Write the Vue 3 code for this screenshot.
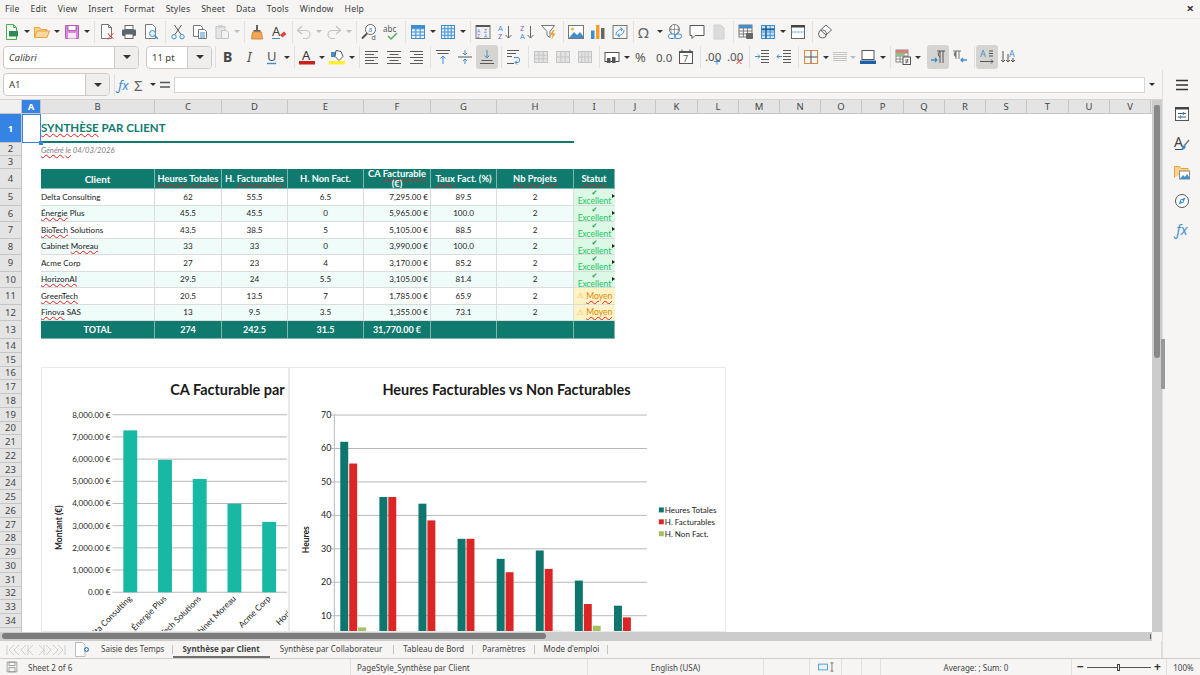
<script setup>
const blue = '#3f8fcf'
const gray = '#5a5a5a'
const dim = '#c4c4c4'

const txt = (x, y, size, str, fill = gray, extra = '') =>
  `<text x="${x}" y="${y}" font-size="${size}" font-family="Noto Sans, sans-serif" fill="${fill}" stroke="none" ${extra}>${str}</text>`

const grid = (x, y, w, h, nx, ny, color, fill = '#fff') => {
  let out = `<rect x="${x}" y="${y}" width="${w}" height="${h}" fill="${fill}" stroke="${color}"/>`
  for (let i = 1; i < nx; i++) out += `<path d="M${x + (w * i) / nx} ${y}v${h}" stroke="${color}"/>`
  for (let i = 1; i < ny; i++) out += `<path d="M${x} ${y + (h * i) / ny}h${w}" stroke="${color}"/>`
  return out
}

const lines = (rows, color = gray) =>
  rows.map(([x, y, w]) => `<path d="M${x} ${y}h${w}" stroke="${color}"/>`).join('')

const icons = {
  new: `<path d="M2.5 .5h7l3 3v12h-10z" fill="#f4fbf4" stroke="#4caf50"/><path d="M9.5 .5v3h3" stroke="#4caf50"/><rect x="5" y="7" width="9" height="5.5" fill="#2e8b57"/>`,
  open: `<path d="M.5 13.5v-10h5l1.5 2h6v2" fill="#fbd38a" stroke="#e8a33d"/><path d="M.5 13.5l2.5-6.5h12.5l-2.5 6.5z" fill="#fcd9a0" stroke="#e8a33d"/>`,
  save: `<path d="M1.5 1.5h13v13h-13z" fill="#d58ed8" stroke="#b45cb8"/><rect x="4" y="1.5" width="8" height="5" fill="#fff" stroke="#b45cb8"/><rect x="4" y="9" width="8" height="5.5" fill="#f6e6f7"/>`,
  pdf: `<path d="M2.5 .5h7l3 3v11h-10z" fill="#fff" stroke="#777"/><path d="M9.5 .5v3h3" stroke="#777"/><path d="M9 9c1 3 3 4 5.5 5.5M14.5 9.5c-2 1-4 3-5.5 6" stroke="#e0453a"/>`,
  print: `<rect x="4" y="1.5" width="8" height="4" fill="#fff" stroke="#666"/><rect x="1" y="5.5" width="14" height="6.5" rx="1" fill="#5c6670"/><rect x="4" y="10" width="8" height="4.5" fill="#fff" stroke="#666"/>`,
  preview: `<path d="M2.5 .5h7l3 3v11h-10z" fill="#fff" stroke="#777"/><circle cx="9.5" cy="9.5" r="3" fill="#e3f0fa" stroke="${blue}"/><path d="M11.8 11.8l3 3" stroke="${blue}" stroke-width="1.5"/>`,
  cut: `<path d="M4.5 1l6.5 9.5M11.5 1L5 10.5" stroke="#555"/><circle cx="4" cy="12.7" r="2.2" stroke="${blue}"/><circle cx="12" cy="12.7" r="2.2" stroke="${blue}"/>`,
  copy: `<path d="M1.5 1.5h7l2 2v9h-9z" fill="#fff" stroke="#777"/><path d="M6.5 5.5h6l2 2v7h-8z" fill="#fff" stroke="#777"/>${lines([[8, 9, 5], [8, 11, 5], [8, 13, 5]], blue)}`,
  paste: `<rect x="2" y="2.5" width="9" height="12" fill="#e6e6e6" stroke="${dim}"/><rect x="4.5" y="1" width="4" height="3" fill="#d0d0d0"/><path d="M7.5 6.5h5l2 2v6h-7z" fill="#f2f2f2" stroke="${dim}"/>`,
  clone: `<path d="M7 1h2v5H7z" fill="#666"/><path d="M4.5 6h7v2h-7z" fill="#666"/><path d="M3.5 8h9l1 7h-11z" fill="#f0a858" stroke="#d98a3a"/>`,
  clear: `${txt(1, 12, 13, 'A', '#444')}<path d="M9 11l4-3.5 2.5 2.5-4 3.5z" fill="#e0453a"/><path d="M1 14.5h8" stroke="${blue}"/>`,
  undo: `<path d="M6 2L1.5 6.5 6 10M1.5 6.5H10a4 4 0 0 1 0 8H7" stroke="${dim}" stroke-width="1.2"/>`,
  redo: `<path d="M10 2l4.5 4.5L10 10M14.5 6.5H6a4 4 0 0 0 0 8h3" stroke="${dim}" stroke-width="1.2"/>`,
  find: `<circle cx="9.5" cy="5.5" r="5" fill="#fff" stroke="#666"/><path d="M6 9.5l-5 5" stroke="#555" stroke-width="2"/>${txt(7.3, 8, 7, 'a', blue)}${txt(10.5, 15.5, 7, 'd', '#555')}`,
  spell: `${txt(0, 8, 8, 'abc', '#555')}<path d="M5 12l3 3 6-6" stroke="#4caf50" stroke-width="1.4"/>`,
  rows: grid(1.5, 1.5, 13, 13, 3, 4, blue, '#e8f2fa') + `<rect x="1.5" y="1.5" width="13" height="3" fill="${blue}"/>`,
  cols: grid(1.5, 1.5, 13, 13, 4, 4, blue, '#e8f2fa'),
  sort: `<rect x="1" y="1.5" width="14" height="13" fill="#f0f0f0" stroke="#777"/><rect x="1" y="1" width="14" height="2" fill="#555"/>${txt(2, 8.5, 5, 'A', blue)}${txt(9, 8.5, 5, 'Z', '#8e63c8')}${txt(2, 14, 5, 'Z', '#8e63c8')}${txt(9, 14, 5, 'A', blue)}`,
  asc: `${txt(1, 7, 7.5, 'A', blue)}${txt(1, 15, 7.5, 'Z', '#8e63c8')}<path d="M11.5 2v12M8.5 11l3 3 3-3" stroke="#666"/>`,
  desc: `${txt(1, 7, 7.5, 'Z', '#8e63c8')}${txt(1, 15, 7.5, 'A', blue)}<path d="M11.5 2v12M8.5 11l3 3 3-3" stroke="#666"/>`,
  filter: `<path d="M.5 1.5h13L9 7.5v6l-3-2v-4z" fill="#fff" stroke="#777"/><path d="M12 6l-3 5h2.500l-1 4.500 4-6h-2.500l1.500-3.500z" fill="#f0a030"/>`,
  image: `<rect x=".5" y="1.5" width="15" height="13" fill="#fff" stroke="#777"/><circle cx="4.500" cy="5" r="1.500" fill="#f0b040"/><path d="M1 14l5-6 3 3 3-3 3 4v2z" fill="${blue}"/>`,
  chart: `<rect x="1" y="6.500" width="3.500" height="8.500" fill="${blue}"/><rect x="6" y="1" width="3.500" height="14" fill="#f0a030"/><rect x="11" y="4" width="3.500" height="11" fill="#666"/>`,
  pivot: `<rect x="1" y="1.500" width="14" height="13" fill="#f4f4f4" stroke="#777"/><path d="M4 11c0-3 2-5 6-6M8 3.500l2.500 1.500L9 7M12 6c0 3-2 5-6 5.500M8 13l-2.500-1.500L7 9.500" stroke="${blue}"/>`,
  omega: txt(1, 13.5, 15, 'Ω', '#666'),
  link: `<circle cx="7.500" cy="5.500" r="5" fill="#fff" stroke="#777"/><path d="M2.500 5.500h10M7.500 .5v10M4.500 1.500c-1 2.500-1 5.500 0 8M10.500 1.500c1 2.500 1 5.500 0 8" stroke="#777" stroke-width=".7"/><rect x="1.500" y="10" width="7" height="4.500" rx="2.200" fill="#fff" stroke="${blue}"/><rect x="7.500" y="10" width="7" height="4.500" rx="2.200" fill="none" stroke="${blue}"/>`,
  comment: `<path d="M1 1.500h14v10H6l-3 3v-3H1z" fill="#fff" stroke="#555"/>`,
  note: `<path d="M3 1h7l3 3v11H3z" fill="#dcdcdc" stroke="#d0d0d0"/>`,
  freeze: grid(1, 1, 13, 12, 3, 4, '#777') + `<rect x="1" y="1" width="13" height="3" fill="${blue}"/><rect x="8" y="9" width="7" height="6" rx="1" fill="#666"/>`,
  split: grid(1.500, 1.500, 13, 13, 3, 4, blue, '#cfe3f4') + `<path d="M1.500 5.500h13M6 1.500v13" stroke="#1d5f99" stroke-width="1.300"/>`,
  header: `<rect x="1.500" y="1.500" width="13" height="13" fill="#fff" stroke="#666"/><rect x="1" y="1" width="14" height="2.500" fill="#444"/><path d="M1.500 8h13" stroke="${blue}" stroke-dasharray="2 1"/>`,
  shapes: `<path d="M9 1l5.500 5L9 11 3.500 6z" fill="#fff" stroke="#666"/><circle cx="5.500" cy="10" r="4" fill="none" stroke="#666"/>`,

  bold: txt(3, 13, 14, 'B', '#444', 'font-weight="700"'),
  italic: txt(5, 13, 14, 'I', '#555', 'font-style="italic"'),
  under: `${txt(3, 12, 13, 'U', '#555')}<path d="M3 14.500h9" stroke="${blue}" stroke-width="1.400"/>`,
  fcolor: `${txt(3, 11, 13, 'A', '#333')}<rect x="0" y="12" width="16" height="3.500" fill="#c9211e"/>`,
  bcolor: `<path d="M2 3h5v5H2z" fill="${blue}"/><path d="M7 1.500l5 1 2 5-4 4-4-4z" fill="#fff" stroke="#555"/><rect x="0" y="12" width="16" height="3.500" fill="#ffef33"/>`,
  left: lines([[1, 2.500, 13], [1, 5.500, 9], [1, 8.500, 13], [1, 11.500, 9], [1, 14.500, 13]]),
  center: lines([[1, 2.500, 14], [3.500, 5.500, 9], [1, 8.500, 14], [3.500, 11.500, 9], [1, 14.500, 14]]),
  right: lines([[2, 2.500, 13], [6, 5.500, 9], [2, 8.500, 13], [6, 11.500, 9], [2, 14.500, 13]]),
  top: `${lines([[1, 1.500, 14], [2.500, 4.500, 11]])}<path d="M8 15V7M5.500 9.500L8 7l2.500 2.500" stroke="${blue}"/>`,
  mid: `${lines([[1, 8, 14]])}<path d="M8 1v5M6 4l2 2 2-2M8 15v-5M6 12l2-2 2 2" stroke="${blue}"/>`,
  bottom: `${lines([[2.500, 11.500, 11], [1, 14.500, 14]])}<path d="M8 1v8M5.500 6.500L8 9l2.500-2.500" stroke="${blue}"/>`,
  wrap: `${lines([[1, 1.500, 12], [1, 4.500, 9], [1, 7.500, 5], [1, 14.500, 7]])}<path d="M8 8.500h4c2 0 2 5 0 5H9M11 11.500l-2 2 2 2" stroke="${blue}"/>`,
  merge1: grid(1.500, 2.500, 13, 11, 3, 3, dim, '#e4e4e4'),
  merge2: grid(1.500, 2.500, 13, 11, 3, 2, dim, '#e4e4e4'),
  merge3: grid(1.500, 2.500, 13, 11, 4, 2, dim, '#e4e4e4'),
  currency: `<rect x="1" y="3.500" width="14" height="9" fill="#fff" stroke="#555"/><rect x="3" y="9" width="3.500" height="5" fill="#555"/><rect x="8" y="8" width="3.500" height="6" fill="#555"/>`,
  percent: txt(1, 13, 13, '%', '#555'),
  dec0: txt(0, 13, 11.5, '0.0', '#555'),
  date: `<rect x="1.500" y="2.500" width="13" height="12" fill="#fff" stroke="#555"/><rect x="1" y="2" width="14" height="2" fill="#555"/><path d="M4 .5v2M12 .5v2" stroke="#555"/>${txt(5, 13, 9, '7', '#555')}`,
  addDec: `${txt(0, 12, 11.5, '.00', '#555')}<path d="M12 9.500v6M9 12.500h6" stroke="${blue}"/>`,
  delDec: `${txt(0, 12, 11.5, '.00', '#555')}<path d="M9.500 10l5 5M14.500 10l-5 5" stroke="#e0453a"/>`,
  indent: `${lines([[7, 1.500, 8], [7, 4.500, 8], [7, 7.500, 8], [7, 10.500, 8], [7, 13.500, 8]])}<path d="M1 7.500h5M4 5.500l2 2-2 2" stroke="${blue}"/>`,
  outdent: `${lines([[7, 1.500, 8], [7, 4.500, 8], [7, 7.500, 8], [7, 10.500, 8], [7, 13.500, 8]])}<path d="M6 7.500H1M3 5.500l-2 2 2 2" stroke="${blue}"/>`,
  border: `<rect x="1.500" y="1.500" width="13" height="13" stroke="#e08a3c"/><path d="M8 1.500v13M1.500 8h13" stroke="#555"/>`,
  borderline: lines([[1, 3.500, 14], [1, 5.500, 14], [1, 7.500, 14], [1, 9.500, 14], [1, 11.500, 14]], dim),
  bordercolor: `<rect x="2" y="1.500" width="12" height="9" fill="#fff" stroke="#555"/><rect x="0" y="11.500" width="16" height="3.500" fill="#1f5fa8"/>`,
  cond: grid(1, 1, 12, 12, 3, 4, '#888') + `<rect x="1" y="1" width="12" height="3" fill="#d9807a"/><rect x="1" y="4" width="8" height="3" fill="#8cc084"/><rect x="8" y="8" width="7.500" height="7.500" fill="#fff" stroke="#555"/><path d="M10 11h3.500M10 13h3.500M13 10l-2 4.500" stroke="#555" stroke-width=".8"/>`,
  ltr: `<path d="M7 2h8M10 2v12M13 2v12" stroke="#555"/><path d="M10 2.500a3 3 0 0 0 0 5.500" stroke="#555"/><path d="M1 11h6M5 9l2 2-2 2" stroke="${blue}" stroke-width="1.300"/>`,
  rtl: `<path d="M1 2h8M4 2v8M7 2v8" stroke="#777"/><path d="M4 2.500a3 3 0 0 0 0 5.500" fill="#777" stroke="#777"/><path d="M15 11H9M11 9l-2 2 2 2" stroke="${blue}" stroke-width="1.300"/>`,
  horiz: `${txt(1, 8, 9, 'A', blue)}<path d="M10 2h4M10 4.500h4M10 7h4" stroke="#555"/><path d="M1 12.500h13M12 10.500l2 2-2 2" stroke="#555"/>`,
  vert: `${txt(8, 8, 9, 'A', blue)}<path d="M2 2v11M0 11l2 2 2-2M7 5v8M5 11l2 2 2-2M12 9v4M10 11l2 2 2-2" stroke="#555"/>`,

  menu: `<path d="M2 3.500h12M2 8h12M2 12.500h12" stroke="#333" stroke-width="1.500"/>`,
  props: `<rect x="1.500" y="1.500" width="13" height="13" fill="#fff" stroke="#555"/><rect x="1" y="1" width="14" height="2.500" fill="#444"/><path d="M4 7.500h8M4 11h8" stroke="#555"/><path d="M9.500 6v3M6.500 9.500v3" stroke="${blue}" stroke-width="1.400"/>`,
  styles: `${txt(0, 12, 14, 'A', '#444')}<path d="M1 14.500h8" stroke="#444"/><path d="M15 5l-5 6" stroke="#777" stroke-width="1.400"/><path d="M10.500 10c-2 .5-2.500 2.500-3.500 5 2.500 0 4.500-1 4.800-3.500z" fill="${blue}"/>`,
  gallery: `<path d="M.5 13.500v-11h5l1.500 2h7v2" fill="#fbd38a" stroke="#e8a33d"/><rect x="5.500" y="7" width="10" height="8" fill="#fff" stroke="#888"/><path d="M6 15l3-4 2 2 2-3 2 3v2z" fill="${blue}"/>`,
  nav: `<circle cx="8" cy="8" r="6.500" fill="#fff" stroke="#555"/><path d="M11.500 4.500L9.500 9.500 4.500 11.500 6.500 6.500z" fill="${blue}"/><circle cx="8" cy="8" r="1" fill="#fff"/>`,
  fx: txt(1, 13, 14, 'ƒx', blue, 'font-style="italic"'),
  fxBar: txt(1, 13, 13, 'ƒx', blue, 'font-style="italic"'),
  sigma: txt(2, 13.500, 15, 'Σ', '#666'),
  equals: `<path d="M3 5.500h10M3 10h10" stroke="#555" stroke-width="1.600"/>`,
  saved: `<path d="M1.500 1.500h13v13h-13z" stroke="#888"/><rect x="4" y="1.500" width="8" height="4.500" stroke="#888"/><rect x="4" y="9" width="8" height="5.500" stroke="#888"/>`,
}

// toolbar tokens: "|" separator, "|3" narrow one, "^" dropdown arrow, "^d" disabled arrow, "_" blank,
// "*name" pressed button, "name:19" button with its own width
const parse = (list) =>
  list.split(' ').map((t) => {
    if (t[0] === '|') return { kind: 'sep', w: t[1] ? +t[1] : 5 }
    if (t[0] === '^') return { kind: 'caret', off: t[1] === 'd' }
    if (t === '_') return { kind: 'blank' }
    const [name, w] = t.replace('*', '').split(':')
    return { kind: 'btn', name, on: t[0] === '*', w: w ? +w : 22 }
  })

const toolbarOne = parse(
  'new ^ open ^ save ^ | pdf print preview | cut copy paste ^d | clone clear |3 undo ^d redo ^d | find spell | rows ^ cols ^ | sort asc desc filter | image chart pivot |3 omega ^ link comment note | freeze split ^ header | shapes'
)
const toolbarTwo = parse(
  'bold italic under ^ | fcolor ^ bcolor ^ | left center right | top mid *bottom | wrap | merge1 merge2 merge3 | currency ^ percent dec0 date | addDec delDec | indent outdent | border ^ borderline:19 ^d bordercolor ^ | cond ^ _ *ltr rtl | *horiz vert'
)

const columns = [
  ['A', 19], ['B', 114], ['C', 67], ['D', 66], ['E', 76], ['F', 67], ['G', 66], ['H', 77],
  ['I', 41], ['J', 41], ['K', 42], ['L', 41], ['M', 41], ['N', 41], ['O', 41], ['P', 42],
  ['Q', 41], ['R', 41], ['S', 41], ['T', 42], ['U', 41], ['V', 41],
]

const rowHeights = [29, 12.5, 13.5, 20, 16.5, 16.5, 16.5, 16.5, 16.5, 16.5, 16.5, 16.5, 18]
while (rowHeights.length < 34) rowHeights.push(13.75)

const misspelt = new Set([
  'SYNTHÈSE', 'Généré', 'le', 'Heures', 'Totales', 'Facturables', 'Facturable', 'Taux', 'Nb', 'Projets', 'Statut',
  'Énergie', 'BioTech', 'Moreau', 'HorizonAI', 'GreenTech', 'Finova', 'Moyen',
])
const words = (text) => String(text).split(/( )/)

const heads = [
  { t: 'Client', cls: 'big' },
  { t: 'Heures Totales' },
  { t: 'H. Facturables' },
  { t: 'H. Non Fact.' },
  { t: 'CA Facturable (€)', cls: 'wrap' },
  { t: 'Taux Fact. (%)' },
  { t: 'Nb Projets' },
  { t: 'Statut' },
]

const clients = [
  ['Delta Consulting', 62, 55.5, 6.5, '7,295.00 €', '89.5', 7295],
  ['Énergie Plus', 45.5, 45.5, 0, '5,965.00 €', '100.0', 5965],
  ['BioTech Solutions', 43.5, 38.5, 5, '5,105.00 €', '88.5', 5105],
  ['Cabinet Moreau', 33, 33, 0, '3,990.00 €', '100.0', 3990],
  ['Acme Corp', 27, 23, 4, '3,170.00 €', '85.2', 3170],
  ['HorizonAI', 29.5, 24, 5.5, '3,105.00 €', '81.4', 3105],
  ['GreenTech', 20.5, 13.5, 7, '1,785.00 €', '65.9', 1785],
  ['Finova SAS', 13, 9.5, 3.5, '1,355.00 €', '73.1', 1355],
]

// chart 1, drawn in page coordinates through the viewBox
const euroY = (v) => 593 - v * 0.02237
const euroTicks = [0, 1, 2, 3, 4, 5, 6, 7, 8].map((n) => ({
  y: euroY(n * 1000),
  label: `${n === 0 ? '0' : n + ',000'}.00 €`,
}))
const caBars = clients.slice(0, 5).map((c, i) => ({ x: 123 + i * 35, y: euroY(c[6]), h: 593 - euroY(c[6]) }))
const caLabels = clients.slice(0, 6).map((c, i) => ({ name: c[0], x: 132 + i * 35, y: 600 }))

// chart 2
const hourY = (v) => 650.3 - v * 3.37
const hourTicks = [10, 20, 30, 40, 50, 60, 70].map((v) => ({ v, y: hourY(v) }))
const series = [
  { i: 1, color: '#0f766e' },
  { i: 2, color: '#dc2626' },
  { i: 3, color: '#a4bf66' },
]
const hourBars = clients.flatMap((c, g) =>
  series.map((s, k) => ({
    x: 339 + g * 39.4 + k * 9,
    y: hourY(c[s.i]),
    h: 650.3 - hourY(c[s.i]),
    color: s.color,
  }))
)
const legend = [
  { label: 'Heures Totales', color: '#0f766e', y: 510 },
  { label: 'H. Facturables', color: '#dc2626', y: 522 },
  { label: 'H. Non Fact.', color: '#a4bf66', y: 534 },
]

const menus = ['File', 'Edit', 'View', 'Insert', 'Format', 'Styles', 'Sheet', 'Data', 'Tools', 'Window', 'Help']
const sideIcons = ['menu', 'props', 'styles', 'gallery', 'nav', 'fx']
const tabs = ['Saisie des Temps', 'Synthèse par Client', 'Synthèse par Collaborateur', 'Tableau de Bord', 'Paramètres', "Mode d'emploi"]
</script>

<template>
  <div class="app">
    <div class="menubar">
      <span v-for="m in menus" :key="m" class="menu-item">{{ m }}</span>
      <span class="close">×</span>
    </div>

    <div class="toolbar">
      <template v-for="(t, i) in toolbarOne" :key="i">
        <span v-if="t.kind === 'sep'" class="sep" :style="{ width: t.w + 'px' }"></span>
        <span v-else-if="t.kind === 'caret'" class="caret" :class="{ off: t.off }"></span>
        <span v-else-if="t.kind === 'blank'" class="blank"></span>
        <span v-else class="tool" :class="{ on: t.on }" :style="{ width: t.w + 'px' }">
          <svg width="16" height="16" viewBox="0 0 16 16" fill="none" v-html="icons[t.name]"></svg>
        </span>
      </template>
    </div>

    <div class="toolbar second">
      <div class="combo font-combo"><span class="combo-text italic">Calibri</span><span class="combo-btn"><i class="caret-big"></i></span></div>
      <div class="combo size-combo"><span class="combo-text">11 pt</span><span class="combo-btn"><i class="caret-big"></i></span></div>
      <span class="sep sep-combo"></span>
      <template v-for="(t, i) in toolbarTwo" :key="i">
        <span v-if="t.kind === 'sep'" class="sep" :style="{ width: t.w + 'px' }"></span>
        <span v-else-if="t.kind === 'caret'" class="caret" :class="{ off: t.off }"></span>
        <span v-else-if="t.kind === 'blank'" class="blank"></span>
        <span v-else class="tool" :class="{ on: t.on }" :style="{ width: t.w + 'px' }">
          <svg width="16" height="16" viewBox="0 0 16 16" fill="none" v-html="icons[t.name]"></svg>
        </span>
      </template>
    </div>

    <div class="middle">
      <div class="work">
        <div class="formula">
          <div class="combo name-combo"><span class="combo-text">A1</span><span class="combo-btn"><i class="caret-big"></i></span></div>
          <span class="sep formula-sep"></span>
          <svg class="bar-icon" width="16" height="16" viewBox="0 0 16 16" fill="none" v-html="icons.fxBar"></svg>
          <svg class="bar-icon" width="16" height="16" viewBox="0 0 16 16" fill="none" v-html="icons.sigma"></svg>
          <span class="caret sigma-caret"></span>
          <svg class="bar-icon" width="16" height="16" viewBox="0 0 16 16" fill="none" v-html="icons.equals"></svg>
          <div class="formula-input"></div>
          <span class="caret formula-caret"></span>
        </div>

        <div class="sheet-row">
          <div class="sheet">
            <div class="col-heads">
              <span class="corner"></span>
              <span
                v-for="c in columns"
                :key="c[0]"
                class="col-head"
                :class="{ sel: c[0] === 'A' }"
                :style="{ width: c[1] + 'px' }"
              >{{ c[0] }}</span>
            </div>

            <div class="sheet-body">
              <div class="row-heads">
                <span
                  v-for="(h, i) in rowHeights"
                  :key="i"
                  class="row-head"
                  :class="{ sel: i === 0 }"
                  :style="{ height: h + 'px' }"
                >{{ i + 1 }}</span>
              </div>

              <div class="cells">
                <div class="title-row">
                  <span class="title">
                    <span v-for="(w, i) in words('SYNTHÈSE PAR CLIENT')" :key="i" :class="{ wave: misspelt.has(w) }">{{ w }}</span>
                  </span>
                </div>
                <div class="generated">
                  <span v-for="(w, i) in words('Généré le 04/03/2026')" :key="i" :class="{ wave: misspelt.has(w) }">{{ w }}</span>
                </div>

                <div class="table">
                  <div class="tr head">
                    <div v-for="h in heads" :key="h.t" class="td" :class="h.cls">
                      <span>
                        <span v-for="(w, i) in words(h.t)" :key="i" :class="{ wave: misspelt.has(w) }">{{ w }}</span>
                      </span>
                    </div>
                  </div>

                  <div v-for="(c, r) in clients" :key="c[0]" class="tr body" :class="{ alt: r % 2 === 1 }">
                    <div class="td name">
                      <span>
                        <span v-for="(w, i) in words(c[0])" :key="i" :class="{ wave: misspelt.has(w) }">{{ w }}</span>
                      </span>
                    </div>
                    <div class="td">{{ c[1] }}</div>
                    <div class="td">{{ c[2] }}</div>
                    <div class="td">{{ c[3] }}</div>
                    <div class="td money">{{ c[4] }}</div>
                    <div class="td">{{ c[5] }}</div>
                    <div class="td">2</div>
                    <div v-if="r < 6" class="td status good"><b>✔</b><span>Excellent</span></div>
                    <div v-else class="td status medium"><span class="warn">⚠</span>&nbsp;<span class="wave">Moyen</span></div>
                  </div>

                  <div class="tr total">
                    <div class="td">TOTAL</div>
                    <div class="td">274</div>
                    <div class="td">242.5</div>
                    <div class="td">31.5</div>
                    <div class="td">31,770.00 €</div>
                    <div class="td"></div>
                    <div class="td"></div>
                    <div class="td"></div>
                  </div>
                </div>

                <!-- cell cursor and charts float over the grid -->
                <div class="cursor"><i></i></div>

                <svg class="chart chart-ca" viewBox="41 367 248 265" width="248" height="265">
                  <text x="228" y="394" class="chart-title" text-anchor="middle">CA Facturable par</text>
                  <g v-for="t in euroTicks" :key="t.label">
                    <path :d="`M112 ${t.y}H288`" class="gridline" />
                    <text x="110" :y="t.y + 3" class="tick" text-anchor="end">{{ t.label }}</text>
                  </g>
                  <rect v-for="b in caBars" :key="b.x" :x="b.x" :y="b.y" width="14" :height="b.h" fill="#17b9a4" />
                  <text class="axis-name" transform="translate(61 528) rotate(-90)" text-anchor="middle">Montant (€)</text>
                  <text
                    v-for="l in caLabels"
                    :key="l.name"
                    class="tick cat"
                    text-anchor="end"
                    :transform="`translate(${l.x} ${l.y}) rotate(-45)`"
                  >{{ l.name }}</text>
                </svg>

                <svg class="chart chart-hours" viewBox="289 367 437 265" width="437" height="265">
                  <text x="506.500" y="394" class="chart-title" text-anchor="middle">Heures Facturables vs Non Facturables</text>
                  <g v-for="t in hourTicks" :key="t.v">
                    <path :d="`M330 ${t.y}H648`" class="gridline" />
                    <text x="330" :y="t.y + 3" class="tick big-tick" text-anchor="end">{{ t.v }}</text>
                  </g>
                  <path d="M333 414V632" class="gridline" />
                  <rect v-for="b in hourBars" :key="b.x" :x="b.x" :y="b.y" width="8" :height="b.h" :fill="b.color" />
                  <text class="axis-name" transform="translate(307 540) rotate(-90)" text-anchor="middle">Heures</text>
                  <g v-for="l in legend" :key="l.label">
                    <rect x="660" :y="l.y - 2.500" width="5" height="5" :fill="l.color" />
                    <text x="666" :y="l.y + 3" class="tick legend-text">{{ l.label }}</text>
                  </g>
                </svg>
              </div>
            </div>
          </div>

          <div class="vscroll"><span class="vthumb"></span></div>
          <span class="split-handle"></span>
        </div>

        <div class="hscroll"><span class="hthumb"></span><span class="hend"></span></div>

        <div class="tabbar">
          <svg class="tab-nav" width="60" height="14" viewBox="0 0 60 14" fill="none">
            <path d="M1 2v10M8 2L3 7l5 5M13 2L8 7l5 5M20 2l-5 5 5 5M22 2v10M27 2l-5 5 5 5M33 2l5 5-5 5M38 2v10M40 2l5 5-5 5M47 2l5 5-5 5M52 2l5 5-5 5M59 2v10" stroke="#cfcfcf" />
          </svg>
          <svg class="tab-new" width="16" height="15" viewBox="0 0 16 15" fill="none">
            <path d="M.5 .5h7l2.500 2.500v11.500h-9.500z" fill="#fff" stroke="#bbb" />
            <circle cx="11.500" cy="7.500" r="2.500" fill="#3f8fcf" />
            <path d="M10 7.500h3M11.500 6v3" stroke="#fff" />
          </svg>
          <span v-for="(t, i) in tabs" :key="t" class="tab" :class="{ active: i === 1 }">{{ t }}</span>
        </div>
      </div>

      <div class="sidebar">
        <svg v-for="s in sideIcons" :key="s" width="16" height="16" viewBox="0 0 16 16" fill="none" v-html="icons[s]"></svg>
      </div>
    </div>

    <div class="statusbar">
      <div class="st first">
        <svg width="12" height="12" viewBox="0 0 16 16" fill="none" v-html="icons.saved"></svg>
        <span>Sheet 2 of 6</span>
      </div>
      <div class="st left">PageStyle_Synthèse par Client</div>
      <div class="st">English (USA)</div>
      <div class="st"></div>
      <div class="st sel-mode">
        <svg width="28" height="12" viewBox="0 0 28 12" fill="none">
          <rect x=".5" y="2.500" width="11" height="7" fill="#eaf3fb" stroke="#3f8fcf" />
          <path d="M15 1h4M15 11h4M17 1v10" stroke="#666" />
        </svg>
      </div>
      <div class="st"></div>
      <div class="st"></div>
      <div class="st">Average: ; Sum: 0</div>
      <div class="st zoom">
        <span class="zoom-sign">−</span>
        <span class="zoom-track"><i></i></span>
        <span class="zoom-sign">+</span>
      </div>
      <div class="st last">100%</div>
    </div>
  </div>
</template>

<style scoped>
.app {
  width: 1200px;
  height: 675px;
  overflow: hidden;
  display: flex;
  flex-direction: column;
  background: #f6f5f4;
  color: #3d3d3d;
  font-family: "Noto Sans", sans-serif;
}

.menubar {
  height: 18px;
  display: flex;
  align-items: center;
  gap: 11px;
  padding-left: 5px;
  font-size: 8.7px;
  position: relative;
  letter-spacing: 0.15px;
}

.close {
  position: absolute;
  right: 6px;
  top: 0;
  font-size: 13px;
  line-height: 16px;
  font-weight: 700;
  color: #333;
}

.toolbar {
  height: 26px;
  display: flex;
  align-items: center;
  padding-left: 1px;
  border-top: 1px solid #ebeae8;
  box-sizing: border-box;
}

.toolbar.second {
  padding-left: 3px;
  border-top: none;
}

.tool {
  height: 24px;
  flex: none;
  display: flex;
  align-items: center;
  justify-content: center;
  border-radius: 3px;
}

.tool svg {
  overflow: visible;
}

.tool.on {
  background: #d6d4d1;
}

.sep {
  height: 22px;
  flex: none;
  position: relative;
}

.sep-combo {
  width: 5px;
}

.sep::after {
  content: "";
  position: absolute;
  left: 50%;
  top: 0;
  bottom: 0;
  width: 1px;
  background: #e2e0de;
}

.blank {
  width: 5px;
  flex: none;
}

.caret {
  width: 8px;
  flex: none;
  display: flex;
  justify-content: center;
}

.caret::after {
  content: "";
  border-left: 3px solid transparent;
  border-right: 3px solid transparent;
  border-top: 3px solid #333;
}

.caret.off::after {
  border-top-color: #bdbdbd;
}

.combo {
  height: 23px;
  display: flex;
  box-sizing: border-box;
  border: 1px solid #cfcac5;
  border-radius: 4px;
  background: #fff;
  flex: none;
  font-size: 9.5px;
  overflow: hidden;
}

.font-combo {
  width: 136px;
  margin-right: 7px;
}

.size-combo {
  width: 66px;
}

.name-combo {
  width: 107px;
  margin-left: 3px;
}

.combo-text {
  flex: 1;
  display: flex;
  align-items: center;
  padding-left: 5px;
}

.italic {
  font-style: italic;
}

.combo-btn {
  width: 23px;
  background: #efeeec;
  border-left: 1px solid #cfcac5;
  display: flex;
  align-items: center;
  justify-content: center;
}

.caret-big {
  border-left: 4px solid transparent;
  border-right: 4px solid transparent;
  border-top: 4px solid #333;
}

.middle {
  flex: 1;
  min-height: 0;
  display: flex;
}

.work {
  width: 1162px;
  display: flex;
  flex-direction: column;
}

.formula {
  height: 29px;
  display: flex;
  align-items: center;
  flex: none;
}

.formula-sep {
  width: 5px;
  margin-left: 1px;
}

.bar-icon {
  flex: none;
  overflow: visible;
}

.sigma-caret {
  margin-left: 1px;
}

.formula-input {
  width: 971px;
  height: 16px;
  margin-left: 1px;
  background: #fff;
  border: 1px solid #d8d6d3;
  box-sizing: border-box;
}

.formula-caret {
  margin-left: 3px;
}

.sheet-row {
  flex: 1;
  min-height: 0;
  display: flex;
  position: relative;
  border-top: 1px solid #d5d3d1;
}

.sheet {
  width: 1152px;
  display: flex;
  flex-direction: column;
  background: #fff;
  overflow: hidden;
}

.col-heads {
  height: 14px;
  flex: none;
  display: flex;
  background: #e4e4e4;
  border-bottom: 1px solid #c6c6c6;
  box-sizing: border-box;
  font-size: 9.5px;
  color: #444;
}

.corner {
  width: 22px;
  flex: none;
  background: #f0f0f0;
  border-right: 1px solid #c6c6c6;
  box-sizing: border-box;
}

.col-head {
  flex: none;
  box-sizing: border-box;
  border-right: 1px solid #c6c6c6;
  text-align: center;
  line-height: 13px;
}

.col-head.sel {
  background: #3584e4;
  color: #fff;
  font-weight: 700;
}

.sheet-body {
  flex: 1;
  min-height: 0;
  display: flex;
}

.row-heads {
  width: 22px;
  flex: none;
  background: #e4e4e4;
  border-right: 1px solid #c6c6c6;
  box-sizing: border-box;
  display: flex;
  flex-direction: column;
  font-size: 9.5px;
  color: #444;
}

.row-head {
  flex: none;
  display: flex;
  align-items: center;
  justify-content: center;
  box-sizing: border-box;
  border-bottom: 1px solid #c6c6c6;
}

.row-head.sel {
  background: #3584e4;
  color: #fff;
  font-weight: 700;
}

.cells {
  flex: 1;
  position: relative;
  overflow: hidden;
  padding-left: 19px;
  font-family: Lato, "Liberation Sans", sans-serif;
}

.title-row {
  width: 533px;
  height: 29px;
  box-sizing: border-box;
  border-bottom: 2px solid #107a6e;
  color: #107a6e;
  font-size: 11.5px;
  font-weight: 700;
  line-height: 28px;
}

.generated {
  height: 26px;
  padding-top: 1px;
  box-sizing: border-box;
  color: #808080;
  font-size: 7.7px;
  font-style: italic;
  line-height: 12px;
}

.wave {
  text-decoration: underline wavy #e02020;
  text-decoration-thickness: 1px;
  text-underline-offset: 1px;
}

.table {
  width: 574px;
  font-size: 8.1px;
  color: #222;
}

.tr {
  display: grid;
  grid-template-columns: 114px 67px 66px 76px 67px 66px 77px 41px;
}

.td {
  box-sizing: border-box;
  display: flex;
  align-items: center;
  justify-content: center;
  overflow: hidden;
  border-right: 1px solid #dcdcdc;
  border-bottom: 1px solid #dcdcdc;
  white-space: nowrap;
}

.head {
  height: 20px;
  background: #107a6e;
  color: #fff;
  font-size: 9.3px;
  font-weight: 700;
}

.head .td,
.total .td {
  border-color: #7fb5ae;
}

.head .big {
  font-size: 9.8px;
}

.head .wrap {
  white-space: normal;
  text-align: center;
  line-height: 10px;
}

.body {
  height: 16.5px;
}

.alt {
  background: #effcf9;
}

.name {
  justify-content: flex-start;
}

.money {
  justify-content: flex-end;
  padding-right: 2px;
}

.status {
  position: relative;
  font-size: 8.5px;
  border-right: none;
}

.good {
  background: #dcf9e6;
  color: #22c55e;
  flex-direction: column;
  justify-content: flex-start;
}

.good b {
  display: block;
  height: 8px;
  line-height: 8px;
  font-family: "DejaVu Sans", sans-serif;
  font-size: 7px;
  font-weight: 400;
  color: #16a34a;
}

.good span {
  display: block;
  line-height: 9px;
}

.good::after {
  content: "";
  position: absolute;
  right: 0;
  top: 5px;
  border-left: 3px solid #222;
  border-top: 2px solid transparent;
  border-bottom: 2px solid transparent;
}

.medium {
  background: #fef3c7;
  color: #e08a00;
}

.warn {
  font-family: "DejaVu Sans", sans-serif;
  font-size: 8px;
  color: #f3c244;
}

.total {
  height: 18px;
  background: #107a6e;
  color: #fff;
  font-size: 9px;
  font-weight: 700;
}

.cursor {
  position: absolute;
  left: 0;
  top: 0;
  width: 19px;
  height: 29px;
  box-sizing: border-box;
  border: 1px solid #3584e4;
}

.cursor i {
  position: absolute;
  right: -3px;
  bottom: -3px;
  width: 4px;
  height: 4px;
  background: #3584e4;
}

.chart {
  position: absolute;
  top: 253px;
  background: #fff;
  border: 1px solid #e9e9e9;
  box-sizing: border-box;
  display: block;
}

.chart-ca {
  left: 19px;
}

.chart-hours {
  left: 267px;
}

.chart-title {
  font-family: Lato, "Liberation Sans", sans-serif;
  font-size: 14.6px;
  font-weight: 700;
  fill: #1a1a1a;
}

.gridline {
  stroke: #b8b8b8;
  stroke-width: 1;
  fill: none;
}

.tick {
  font-family: Lato, "Liberation Sans", sans-serif;
  font-size: 8.1px;
  fill: #222;
}

.cat {
  font-size: 8.5px;
}

.big-tick {
  font-size: 9px;
}

.legend-text {
  font-size: 8.1px;
}

.axis-name {
  font-family: Lato, "Liberation Sans", sans-serif;
  font-size: 8.6px;
  font-weight: 700;
  fill: #222;
}

.vscroll {
  width: 10px;
  background: #ccc;
  flex: none;
  padding: 5px 0 0 1.5px;
  box-sizing: border-box;
}

.vthumb {
  display: block;
  width: 6px;
  height: 253px;
  background: #888;
  border-radius: 2px 2px 3px 3px;
}

.split-handle {
  position: absolute;
  right: -3px;
  top: 239px;
  width: 4px;
  height: 50px;
  background: #999;
}

.hscroll {
  height: 9px;
  flex: none;
  margin-right: 10px;
  background: #ccc;
  padding: 1px 0 0 2px;
  box-sizing: border-box;
  position: relative;
}

.hthumb {
  display: block;
  width: 544px;
  height: 6px;
  background: #7c7c7c;
  border-radius: 3px;
}

.hend {
  position: absolute;
  right: 1px;
  top: 2px;
  width: 1px;
  height: 5px;
  background: #666;
}

.tabbar {
  height: 17px;
  flex: none;
  display: flex;
  align-items: center;
  font-size: 8px;
  color: #444;
  padding-left: 6px;
  border-right: 1px solid #ddd;
}

.tab-nav {
  flex: none;
}

.tab-new {
  flex: none;
  margin-left: 9px;
  margin-right: 1px;
}

.tab {
  height: 17px;
  line-height: 16px;
  padding: 0 9px;
  position: relative;
  white-space: nowrap;
}

.tab::after {
  content: "";
  position: absolute;
  right: 0;
  top: 4px;
  height: 9px;
  width: 1px;
  background: #c4c4c4;
}

.tab.active {
  font-weight: 700;
  padding-right: 10px;
  border-bottom: 2px solid #6f6f6f;
  box-sizing: border-box;
}

.tab.active + .tab {
  padding-left: 10px;
  padding-right: 12px;
}

.tab.active::after {
  display: none;
}

.sidebar {
  flex: 1;
  display: flex;
  flex-direction: column;
  align-items: center;
  gap: 13px;
  padding-top: 7px;
  box-sizing: border-box;
  border-left: 1px solid #e0dedc;
}

.sidebar svg {
  flex: none;
  overflow: visible;
}

.statusbar {
  height: 17px;
  flex: none;
  display: grid;
  grid-template-columns: 351px 237px 176px 46px 32px 20px 19px 191px 95px 33px;
  font-size: 8px;
  color: #444;
  border-top: 1px solid #d0cecb;
  box-sizing: border-box;
}

.st {
  display: flex;
  align-items: center;
  justify-content: center;
  border-right: 1px solid #e2e0de;
  min-width: 0;
  white-space: nowrap;
}

.st.first {
  justify-content: flex-start;
  gap: 10px;
  padding-left: 6px;
}

.st.left {
  justify-content: flex-start;
  padding-left: 6px;
}

.st.last {
  border-right: none;
}

.sel-mode {
  justify-content: flex-start;
  padding-left: 8px;
  overflow: visible;
}

.zoom {
  gap: 3px;
}

.zoom-sign {
  font-size: 12px;
  font-weight: 700;
  color: #333;
  line-height: 14px;
}

.zoom-track {
  width: 64px;
  height: 1px;
  background: #555;
  position: relative;
}

.zoom-track i {
  position: absolute;
  left: 30px;
  top: -3px;
  width: 3px;
  height: 7px;
  box-sizing: border-box;
  border: 1px solid #444;
  background: #eee;
}
</style>
